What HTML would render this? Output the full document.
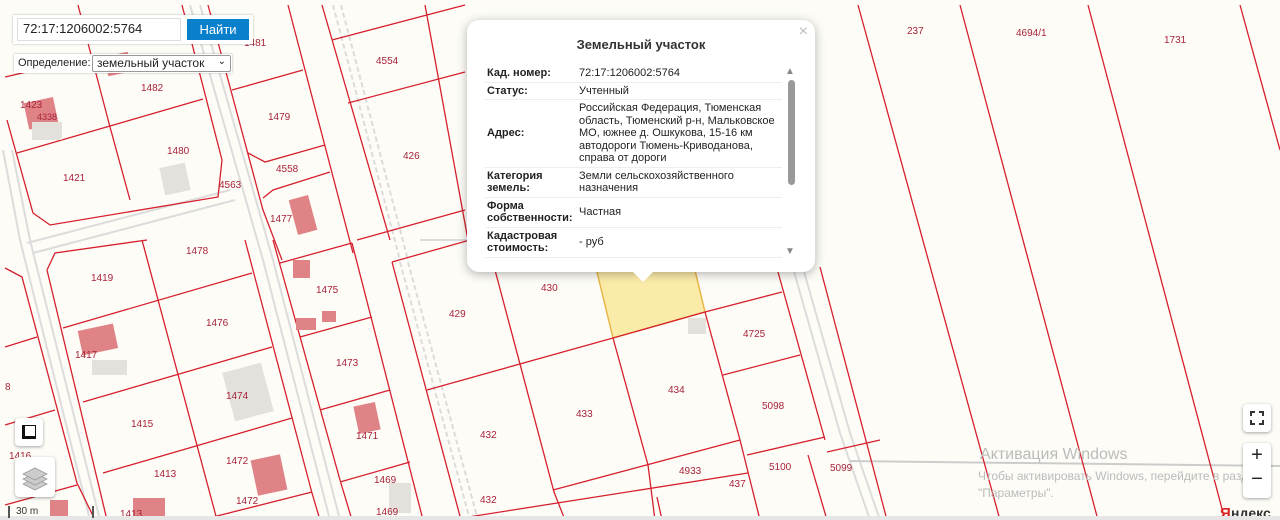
<!DOCTYPE html>
<html><head><meta charset="utf-8"><style>
*{margin:0;padding:0;box-sizing:border-box}
body{width:1280px;height:520px;overflow:hidden;position:relative;background:#fdfcf7;font-family:"Liberation Sans",sans-serif}
svg.map{position:absolute;left:0;top:0}
.lb{font-family:"Liberation Sans",sans-serif;font-size:10px;fill:#a8233a}
.pop{position:absolute;left:467px;top:20px;width:348px;height:252px;background:#fff;border-radius:12px;box-shadow:0 2px 10px rgba(0,0,0,.3)}
.pop h3{position:absolute;left:0;right:0;top:17px;text-align:center;font-size:13px;font-weight:bold;color:#333}
.pop .x{position:absolute;right:7px;top:3px;color:#bbb;font-size:16px}
.tw{position:absolute;left:18px;top:45px;width:297px;height:193px;overflow:hidden}
table{width:297px;border-collapse:collapse;font-size:11px;color:#222}
td{border-bottom:1px solid #eee;vertical-align:middle;padding:2px 2px;line-height:12.5px}
td.k{font-weight:bold;width:92px}
.sb{position:absolute;left:321px;top:60px;width:7px;height:105px;background:#999;border-radius:4px}
.ctl{position:absolute;background:#fff;border-radius:4px;box-shadow:0 1px 3px rgba(0,0,0,.35)}
</style></head><body>
<svg class="map" width="1280" height="520" viewBox="0 0 1280 520">
<g stroke="#dcdcdc" stroke-width="2" fill="none">
<path d="M190 5 L263 260 L330 520"/><path d="M200 5 L273 260 L340 520" />
<path d="M27 243 L230 190 M33 253 L235 200"/>
<path d="M3 150 L20 240 L90 520 M12 150 L30 240 L100 520"/>
<path d="M333 5 L400 260 M341 5 L408 260" stroke-dasharray="5 3"/>
<path d="M400 262 L470 520 M408 262 L478 520" stroke-dasharray="5 3"/>
<path d="M785 240 L840 433 L870 520 M795 240 L850 433 L880 520"/>
<path d="M420 240 L470 240"/>
<path d="M850 461 L1280 466" stroke="#ccc"/>
</g>
<polygon points="597,272 613,338 705,312 693,262 640,262" fill="#fbeba9" stroke="#e8b64a" stroke-width="1.5"/>
<g stroke="#d6202e" stroke-width="1.3" fill="none">
<path d="M5 77 L100 55 M78 5 L110 127 L130 200 M17 153 L203 99 M7 120 L33 213 L50 225 L218 197 L222 160 L182 5"/>
<path d="M232 90 L303 70 M248 153 L265 162 L325 145 M263 198 L273 190 L330 172 M208 5 L263 210 L282 260 M288 5 L353 253"/>
<path d="M332 40 L465 5 M348 103 L465 72 M322 5 L390 240 M357 240 L465 210 M425 5 L468 240"/>
<path d="M5 268 L22 277 L77 483 L95 520 M47 270 L55 253 L147 240 M47 270 L107 520 M142 240 L217 520"/>
<path d="M63 328 L252 273 M83 402 L272 347 M103 473 L292 418 M213 517 L312 492 M5 347 L37 337 M5 425 L55 410 M5 505 L77 485"/>
<path d="M245 240 L312 493 L320 520 M280 263 L352 243 M300 337 L372 317 M320 410 L390 390 M340 482 L410 462 M273 240 L340 480 L352 520 M352 243 L423 520"/>
<path d="M392 262 L461 520 M392 262 L470 240 M495 270 L554 492 L565 520 M427 390 L613 338 L705 312 L782 292 M613 338 L648 465 L655 520 M705 312 L740 440 L760 520"/>
<path d="M553 490 L740 440 M747 455 L825 437 M462 518 L748 473 M723 375 L800 355 M778 272 L825 440 M808 455 L827 520 M827 452 L880 440 M657 497 L662 520"/>
<path d="M858 5 L1000 520 M960 5 L1098 520 M1088 5 L1225 520 M1240 5 L1280 150 M820 267 L887 520"/>
</g>
<g fill="#e08387"><rect x="26" y="100" width="30" height="27" transform="rotate(-12 40 113)"/><rect x="106" y="54" width="24" height="20" transform="rotate(-12 118 64)"/><rect x="293" y="197" width="20" height="36" transform="rotate(-15 303 215)"/><rect x="293" y="260" width="17" height="18"/><rect x="296" y="318" width="20" height="12"/><rect x="322" y="311" width="14" height="11"/><rect x="80" y="327" width="36" height="25" transform="rotate(-12 98 340)"/><rect x="356" y="404" width="22" height="28" transform="rotate(-12 367 418)"/><rect x="254" y="457" width="30" height="36" transform="rotate(-12 269 475)"/><rect x="133" y="498" width="32" height="22"/><rect x="50" y="500" width="18" height="20"/></g>
<g fill="#e4e0dc"><rect x="162" y="165" width="26" height="28" transform="rotate(-12 175 179)"/><rect x="228" y="367" width="40" height="50" transform="rotate(-15 248 392)"/><rect x="688" y="318" width="18" height="16"/><rect x="389" y="483" width="22" height="30"/><rect x="32" y="122" width="30" height="18"/><rect x="92" y="360" width="35" height="15"/></g>
<g class="lb">
<text x="20" y="108">1423</text><text x="37" y="120" font-size="9">4338</text><text x="141" y="91">1482</text><text x="167" y="154">1480</text><text x="63" y="181">1421</text><text x="219" y="188">4563</text><text x="244" y="46">1481</text><text x="268" y="120">1479</text><text x="276" y="172">4558</text><text x="376" y="64">4554</text><text x="403" y="159">426</text><text x="270" y="222">1477</text><text x="186" y="254">1478</text><text x="91" y="281">1419</text><text x="316" y="293">1475</text><text x="206" y="326">1476</text><text x="75" y="358">1417</text><text x="336" y="366">1473</text><text x="226" y="399">1474</text><text x="131" y="427">1415</text><text x="356" y="439">1471</text><text x="226" y="464">1472</text><text x="154" y="477">1413</text><text x="374" y="483">1469</text><text x="236" y="504">1472</text><text x="120" y="517">1413</text><text x="376" y="515">1469</text><text x="9" y="459">1416</text><text x="5" y="390">8</text>
<text x="449" y="317">429</text><text x="541" y="291">430</text><text x="576" y="417">433</text><text x="480" y="438">432</text><text x="668" y="393">434</text><text x="743" y="337">4725</text><text x="762" y="409">5098</text><text x="679" y="474">4933</text><text x="729" y="487">437</text><text x="769" y="470">5100</text><text x="480" y="503">432</text><text x="830" y="471">5099</text>
<text x="907" y="34">237</text><text x="1016" y="36">4694/1</text><text x="1164" y="43">1731</text>
</g>
<text x="980" y="459" font-family="Liberation Sans" font-size="16" fill="#bbb">Активация Windows</text>
<text x="978" y="480" font-family="Liberation Sans" font-size="12" fill="#bbb">Чтобы активировать Windows, перейдите в раздел</text>
<text x="978" y="497" font-family="Liberation Sans" font-size="12" fill="#bbb">"Параметры".</text>
<text x="1220" y="518" font-family="Liberation Sans" font-size="15" fill="#d22" font-weight="bold">Я</text><text x="1231" y="518" font-family="Liberation Sans" font-size="14" fill="#333" font-weight="bold">ндекс</text>
</svg>
<div style="position:absolute;left:0;top:516px;width:1280px;height:4px;background:#e6e6e6"></div>
<div style="position:absolute;left:13px;top:15px;width:240px;height:29px;background:#fff;box-shadow:0 0 2px rgba(0,0,0,.3)"></div>
<div style="position:absolute;left:17px;top:18px;width:164px;height:23px;border:1px solid #ddd;background:#fff;font-size:13px;padding:2px 5px;color:#222">72:17:1206002:5764</div>
<div style="position:absolute;left:187px;top:19px;width:62px;height:21px;background:#0a7fcb;color:#fff;font-size:13px;text-align:center;line-height:21px">Найти</div>
<div style="position:absolute;left:14px;top:54px;width:218px;height:19px;background:#fff;box-shadow:0 0 2px rgba(0,0,0,.3);font-size:11px;padding:3px 4px;color:#222">Определение:</div>
<div style="position:absolute;left:92px;top:55px;width:139px;height:17px;border:1px solid #999;border-radius:2px;background:#fff;font-size:12px;padding:0 4px;color:#222">земельный участок<span style="position:absolute;right:4px;top:0;font-size:10px">&#8964;</span></div>
<div class="pop"><h3>Земельный участок</h3><span class="x">×</span>
<div class="tw"><table>
<tr><td class="k">Кад. номер:</td><td>72:17:1206002:5764</td></tr>
<tr><td class="k">Статус:</td><td>Учтенный</td></tr>
<tr><td class="k">Адрес:</td><td>Российская Федерация, Тюменская область, Тюменский р-н, Мальковское МО, южнее д. Ошкукова, 15-16 км автодороги Тюмень-Криводанова, справа от дороги</td></tr>
<tr><td class="k">Категория земель:</td><td>Земли сельскохозяйственного назначения</td></tr>
<tr><td class="k">Форма собственности:</td><td>Частная</td></tr>
<tr><td class="k">Кадастровая стоимость:</td><td>- руб</td></tr>
<tr><td class="k" style="border:0">Уточненная площадь:</td><td style="border:0">1033 кв.м</td></tr>
</table></div>
<div style="position:absolute;left:318px;top:46px;font-size:10px;color:#888">▲</div>
<div class="sb"></div>
<div style="position:absolute;left:318px;top:226px;font-size:10px;color:#888">▼</div>
<div style="position:absolute;left:164px;top:250px;width:0;height:0;border-left:12px solid transparent;border-right:12px solid transparent;border-top:12px solid #fff"></div>
</div>
<div class="ctl" style="left:15px;top:418px;width:28px;height:28px"><div style="position:absolute;left:7px;top:7px;width:14px;height:14px;border-left:3px solid #111;border-bottom:3px solid #111;border-top:1px solid #111;border-right:1px solid #111"></div></div>
<div class="ctl" style="left:15px;top:457px;width:40px;height:40px"><svg width="40" height="40"><g fill="#ccc" stroke="#999" stroke-width=".8"><path d="M8 27 L20 21 L32 27 L20 33Z"/><path d="M8 22 L20 16 L32 22 L20 28Z"/><path d="M8 17 L20 11 L32 17 L20 23Z"/></g></svg></div>
<div style="position:absolute;left:8px;top:506px;width:86px;height:12px;border-left:2px solid #555;border-right:2px solid #555;font-size:10px;color:#333;padding-left:6px;line-height:12px">30 m</div>
<div class="ctl" style="left:1243px;top:404px;width:28px;height:28px"><svg width="28" height="28"><path d="M8 12V8h4M16 8h4v4M20 16v4h-4M12 20H8v-4" stroke="#333" stroke-width="2" fill="none"/></svg></div>
<div class="ctl" style="left:1243px;top:443px;width:28px;height:55px"><div style="position:absolute;left:0;right:0;top:1px;text-align:center;font-size:20px;color:#222">+</div><div style="position:absolute;left:0;right:0;top:25px;text-align:center;font-size:20px;color:#222">−</div></div>
</body></html>
